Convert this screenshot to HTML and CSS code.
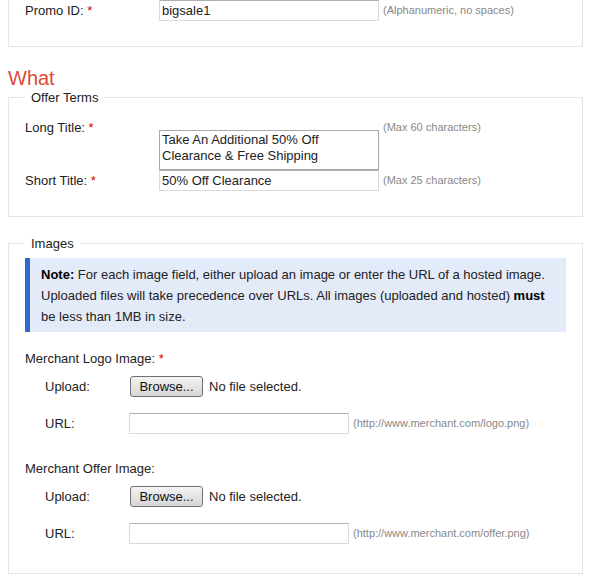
FILE: index.html
```html
<!DOCTYPE html>
<html>
<head>
<meta charset="utf-8">
<link rel="stylesheet" href="styles.css">
</head>
<body>
<div class="page">
  <div class="panel panel-cut">
    <div class="row">
      <label class="lbl">Promo ID: <span class="req">*</span></label>
      <input class="txt" type="text" value="bigsale1">
      <span class="hint">(Alphanumeric, no spaces)</span>
    </div>
  </div>

  <h2 class="section-title">What</h2>

  <fieldset class="panel panel-terms">
    <legend>Offer Terms</legend>
    <div class="row row-top">
      <label class="lbl">Long Title: <span class="req">*</span></label>
      <textarea class="area">Take An Additional 50% Off Clearance &amp; Free Shipping</textarea>
      <span class="hint">(Max 60 characters)</span>
    </div>
    <div class="row">
      <label class="lbl">Short Title: <span class="req">*</span></label>
      <input class="txt" type="text" value="50% Off Clearance">
      <span class="hint">(Max 25 characters)</span>
    </div>
  </fieldset>

  <fieldset class="panel panel-images">
    <legend>Images</legend>
    <div class="note">
      <b>Note:</b> For each image field, either upload an image or enter the URL of a hosted image. Uploaded files will take precedence over URLs. All images (uploaded and hosted) <b>must</b> be less than 1MB in size.
    </div>

    <div class="group">
      <div class="group-label">Merchant Logo Image: <span class="req">*</span></div>
      <div class="subrow subrow-upload">
        <span class="sublbl">Upload:</span>
        <button type="button" class="browse">Browse...</button>
        <span class="nofile">No file selected.</span>
      </div>
      <div class="subrow subrow-url">
        <span class="sublbl">URL:</span>
        <input class="txt" type="text">
        <span class="hint">(http://www.merchant.com/logo.png)</span>
      </div>
    </div>

    <div class="group group-second">
      <div class="group-label">Merchant Offer Image:</div>
      <div class="subrow subrow-upload">
        <span class="sublbl">Upload:</span>
        <button type="button" class="browse">Browse...</button>
        <span class="nofile">No file selected.</span>
      </div>
      <div class="subrow subrow-url">
        <span class="sublbl">URL:</span>
        <input class="txt" type="text">
        <span class="hint">(http://www.merchant.com/offer.png)</span>
      </div>
    </div>
  </fieldset>
</div>
</body>
</html>
```

FILE: styles.css
```css
html, body {
  margin: 0;
  padding: 0;
  background: #fff;
}
body {
  font-family: "Liberation Sans", Arial, sans-serif;
  font-size: 13px;
  color: #222;
}
.page {
  width: 575px;
  margin: 0 0 0 8px;
}
.panel {
  margin: 0;
  border: 1px solid #e5e5e5;
  padding: 8px 16px 25px;
  min-width: 0;
}
.panel-cut {
  border-top: none;
  padding-top: 0;
}
.panel legend {
  padding: 0 6px;
  line-height: 15px;
  color: #222;
}
.section-title {
  margin: 20px 0 0;
  font-size: 20px;
  font-weight: normal;
  line-height: 23px;
  color: #dd4b39;
}
.row {
  display: flex;
  align-items: center;
}
.row-top {
  align-items: flex-start;
  margin-top: 15px;
}
.panel-terms {
  padding-top: 0;
}
.lbl {
  width: 134px;
  flex: none;
  line-height: 15px;
}
.req {
  color: #dd0000;
}
.txt {
  box-sizing: border-box;
  width: 220px;
  height: 21px;
  margin: 0;
  padding: 1px 2px;
  border: 1px solid #dadada;
  border-top-color: #b0b0b0;
  border-radius: 1px;
  font-family: "Liberation Sans", Arial, sans-serif;
  font-size: 13px;
  color: #222;
  background: #fff;
  flex: none;
}
.area {
  box-sizing: border-box;
  width: 220px;
  height: 40px;
  margin: 10px 0 0;
  padding: 1px 2px;
  border: 1px solid #a9a9a9;
  font-family: "Liberation Sans", Arial, sans-serif;
  font-size: 13px;
  line-height: 16px;
  color: #222;
  resize: none;
  overflow: hidden;
  flex: none;
}
.hint {
  margin-left: 4px;
  font-size: 11px;
  line-height: 13px;
  color: #888;
}
.row-top .hint {
  margin-top: 1px;
}
.panel-images {
  margin-top: 19px;
  padding-top: 7px;
  padding-bottom: 29px;
}
.note {
  background: #e4ebf8;
  border-left: 5px solid #3366cc;
  padding: 6px 10px 5px 11px;
  line-height: 21px;
  color: #222;
}
.note b {
  color: #000;
}
.group {
  margin-top: 19px;
}
.group-second {
  margin-top: 27px;
}
.group-label {
  line-height: 15px;
}
.subrow {
  display: flex;
  align-items: center;
  padding-left: 20px;
}
.subrow-upload {
  margin-top: 10px;
}
.subrow-url {
  margin-top: 16px;
}
.sublbl {
  width: 84px;
  flex: none;
}
.browse {
  box-sizing: border-box;
  width: 73px;
  height: 21px;
  margin: 0 0 0 1px;
  padding: 0;
  border: 1px solid #707070;
  border-radius: 3px;
  background: linear-gradient(#f4f4f4, #e4e4e4 50%, #d6d6d6);
  font-family: "Liberation Sans", Arial, sans-serif;
  font-size: 13px;
  color: #111;
  flex: none;
}
.nofile {
  margin-left: 6px;
  color: #222;
}
```
